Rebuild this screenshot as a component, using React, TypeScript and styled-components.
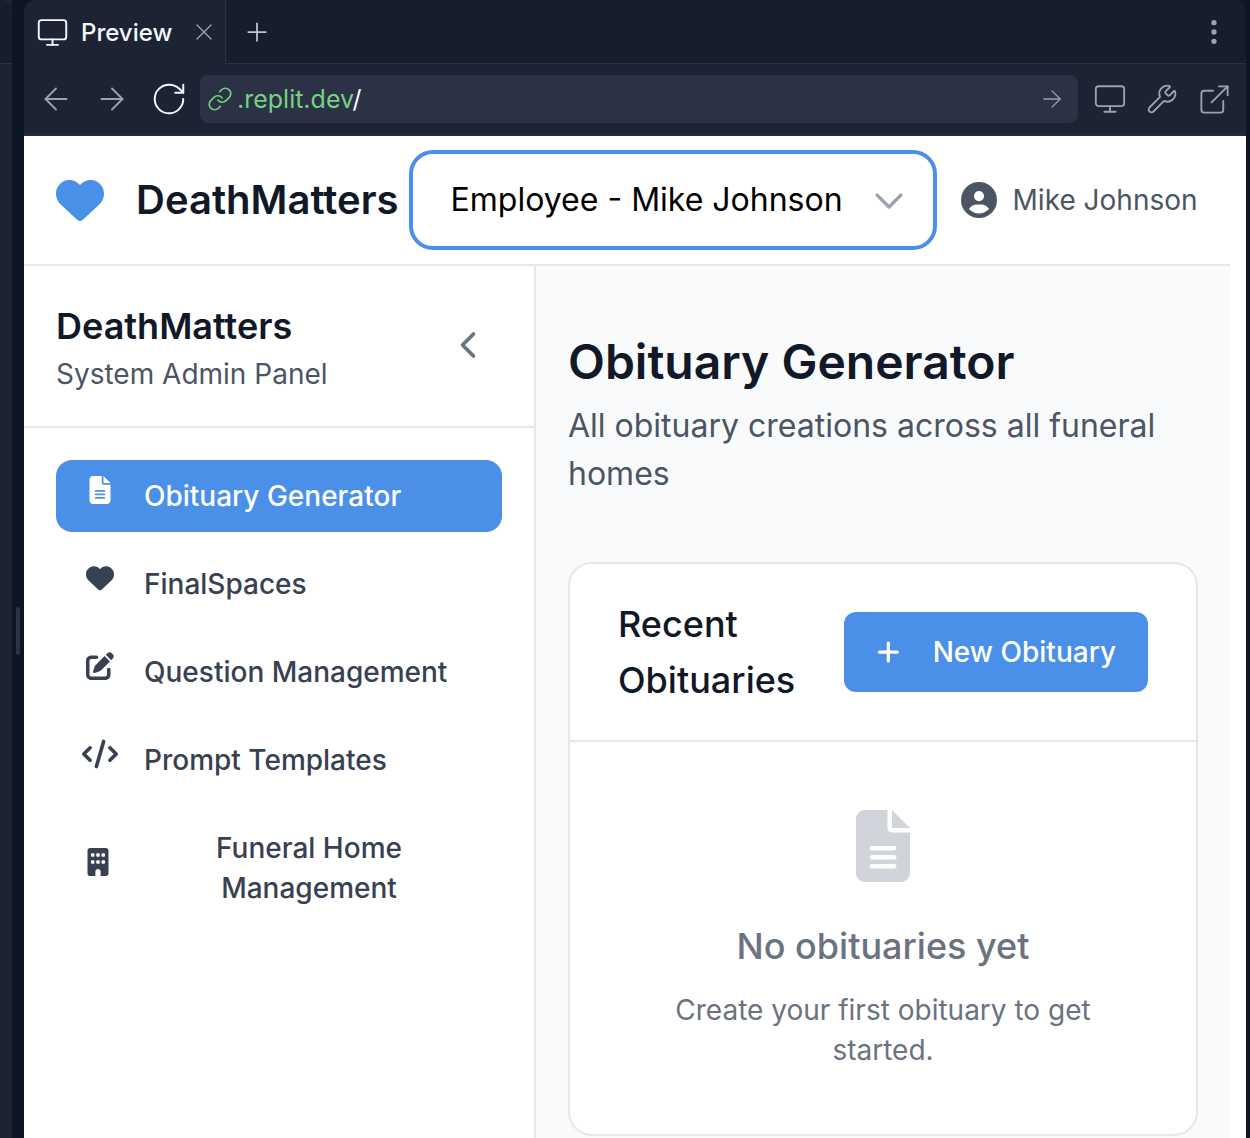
import React from 'react';
import styled, { createGlobalStyle } from 'styled-components';
import { FaHeart, FaFileLines, FaPenToSquare, FaCode, FaBuilding, FaCircleUser, FaPlus } from 'react-icons/fa6';
import { ArrowLeft, ArrowRight, ChevronDown, ChevronLeft, ExternalLink, Link, Monitor, MoreVertical, Plus, RotateCw, Wrench, X } from 'lucide-react';

const GlobalStyle = createGlobalStyle`
  html, body {
    margin: 0;
    height: 100%;
    overflow: hidden;
    background: #0e1525;
  }
  * { box-sizing: border-box; }
  #root { height: 100%; }
`;

const Shell = styled.div`
  display: flex;
  width: 1250px;
  height: 1138px;
  padding-right: 4px;
  overflow: hidden;
  font-family: Inter, "Liberation Sans", sans-serif;
`;

const SideStrip = styled.div`
  width: 24px;
  flex: none;
  display: flex;
`;

const LeftPane = styled.div`
  width: 12px;
  background: #1c2333;
`;

const LeftPaneTop = styled.div`
  height: 64px;
  background: #171d2d;
  border-bottom: 1px solid #2b3245;
  border-top-right-radius: 12px;
`;

const ResizeGutter = styled.div`
  flex: 1;
  padding: 607px 4px 0;
`;

const ResizeHandle = styled.div`
  height: 48px;
  border-radius: 2px;
  background: #2b3245;
`;

const Browser = styled.div`
  flex: 1;
  display: flex;
  flex-direction: column;
  min-width: 0;
`;

const TabBar = styled.div`
  height: 64px;
  flex: none;
  display: flex;
  align-items: stretch;
  background: #171d2d;
  border-bottom: 1px solid #2b3245;
  border-top-left-radius: 12px;
  border-top-right-radius: 12px;
  padding-right: 16px;
`;

const Tab = styled.div`
  width: 202px;
  margin-bottom: -1px;
  display: flex;
  align-items: center;
  padding: 0 7px 0 12px;
  background: #1c2333;
  border-right: 1px solid #2b3245;
  border-top-left-radius: 12px;
  color: #f5f9fc;
  font-size: 24px;
  font-weight: 500;
`;

const TabLabel = styled.span`
  margin-left: 12px;
  flex: 1;
`;

const TabClose = styled.div`
  display: flex;
  color: #9da2a6;
`;

const NewTab = styled.div`
  width: 62px;
  display: flex;
  align-items: center;
  justify-content: center;
  color: #c2c8cc;
`;

const Spacer = styled.div`
  flex: 1;
`;

const DotsBox = styled.div`
  display: flex;
  align-items: center;
  color: #9da2a6;
`;

const AddressRow = styled.div`
  height: 72px;
  flex: none;
  display: flex;
  align-items: center;
  padding: 1px 6px 0 14px;
  background: #1c2333;
  border-bottom: 3px solid #232a3b;
`;

const NavButton = styled.div<{ $bright?: boolean; $w: number }>`
  width: ${(p) => p.$w}px;
  flex: none;
  display: flex;
  color: ${(p) => (p.$bright ? '#f5f9fc' : '#9da2a6')};
`;

const UrlBox = styled.div`
  flex: 1;
  height: 48px;
  display: flex;
  align-items: center;
  padding: 0 12px 0 7px;
  border-radius: 8px;
  background: #2b3245;
  font-size: 25px;
  font-weight: 400;
  color: #f5f9fc;
`;

const UrlText = styled.span`
  flex: 1;
  margin-left: 4px;
`;

const UrlHost = styled.span`
  color: #78d183;
`;

const ToolIcons = styled.div`
  display: flex;
  align-items: center;
  margin-left: 6px;
  color: #9da2a6;
`;

const ToolCell = styled.div`
  width: 52px;
  display: flex;
  justify-content: center;
`;

const PageFrame = styled.div`
  flex: 1;
  min-height: 0;
  background: #fff;
  padding-right: 16px;
  overflow: hidden;
`;

const AppHeader = styled.header`
  height: 130px;
  display: flex;
  align-items: center;
  padding-left: 32px;
  background: #fff;
  border-bottom: 2px solid #e5e7eb;
`;

const Brand = styled.div`
  display: flex;
  align-items: center;
  font-size: 40px;
  font-weight: 600;
  color: #111827;
`;

const BrandName = styled.span`
  margin-top: -2px;
`;

const BrandIcon = styled.div`
  width: 48px;
  height: 48px;
  margin-right: 32px;
  display: flex;
  color: #4a90e9;
`;

const RoleSelect = styled.div`
  width: 528px;
  height: 100px;
  margin-left: 10px;
  padding: 0 20px 2px 38px;
  display: flex;
  align-items: center;
  justify-content: space-between;
  border: 4px solid #4a90e9;
  border-radius: 24px;
  font-size: 32px;
  color: #000;
`;

const SelectCaret = styled.div`
  display: flex;
  margin-top: 4px;
  color: #9ca3af;
`;

const UserBox = styled.div`
  margin-left: 24px;
  display: flex;
  align-items: center;
  gap: 16px;
  font-size: 28px;
  color: #4b5563;
`;

const Body = styled.div`
  display: flex;
  align-items: stretch;
  height: 872px;
`;

const Sidebar = styled.aside`
  width: 512px;
  flex: none;
  background: #fff;
  border-right: 2px solid #e5e7eb;
`;

const SidebarHead = styled.div`
  height: 162px;
  display: flex;
  align-items: center;
  justify-content: space-between;
  padding: 4px 44px 0 32px;
  border-bottom: 2px solid #e5e7eb;
`;

const SidebarTitle = styled.div`
  font-size: 36px;
  line-height: 48px;
  font-weight: 600;
  color: #111827;
`;

const SidebarSub = styled.div`
  margin-top: 4px;
  font-size: 28px;
  line-height: 40px;
  color: #4b5563;
`;

const Collapse = styled.div`
  display: flex;
  margin-bottom: 6px;
  color: #6b7280;
`;

const Nav = styled.nav`
  display: flex;
  flex-direction: column;
  gap: 16px;
  padding: 32px;
`;

const NavItem = styled.div<{ $active?: boolean }>`
  display: flex;
  align-items: center;
  min-height: 72px;
  padding: 16px 24px;
  border-radius: 16px;
  font-size: 28px;
  line-height: 40px;
  font-weight: 500;
  background: ${(p) => (p.$active ? '#4a90e9' : 'transparent')};
  color: ${(p) => (p.$active ? '#fff' : '#374151')};
`;

const NavIcon = styled.div<{ $dy?: number; $w?: number }>`
  width: ${(p) => p.$w ?? 40}px;
  flex: none;
  margin-right: 24px;
  display: flex;
  justify-content: center;
  transform: translateY(${(p) => p.$dy ?? -6}px);
`;

const NavLabel = styled.div`
  flex: 1;
  text-align: center;
`;

const Main = styled.main`
  flex: 1;
  min-width: 0;
  padding: 64px 32px 0;
  background: #f9fafb;
`;

const PageTitle = styled.h1`
  margin: 0;
  font-size: 48px;
  line-height: 64px;
  font-weight: 600;
  color: #111827;
`;

const PageSub = styled.p`
  margin: 8px 0 0;
  font-size: 32px;
  line-height: 48px;
  color: #4b5563;
`;

const Card = styled.section`
  margin-top: 64px;
  height: 574px;
  background: #fff;
  border: 2px solid #e5e7eb;
  border-radius: 24px;
`;

const CardHead = styled.div`
  height: 178px;
  display: flex;
  align-items: center;
  justify-content: space-between;
  padding: 0 48px;
  border-bottom: 2px solid #e5e7eb;
`;

const CardTitle = styled.h2`
  margin: 0;
  width: 190px;
  font-size: 36px;
  line-height: 56px;
  font-weight: 500;
  color: #111827;
`;

const PrimaryButton = styled.button`
  width: 304px;
  height: 80px;
  display: flex;
  align-items: center;
  gap: 32px;
  padding: 0 32px;
  border: 0;
  border-radius: 12px;
  background: #4a90e9;
  color: #fff;
  font-family: inherit;
  font-size: 28px;
  font-weight: 500;
  white-space: nowrap;
`;

const Empty = styled.div`
  display: flex;
  flex-direction: column;
  align-items: center;
  padding-top: 68px;
  text-align: center;
`;

const EmptyIcon = styled.div`
  display: flex;
  color: #d1d5db;
`;

const EmptyTitle = styled.h3`
  margin: 36px 0 0;
  font-size: 36px;
  line-height: 56px;
  font-weight: 500;
  color: #6b7280;
`;

const EmptySub = styled.p`
  margin: 16px 0 0;
  width: 460px;
  font-size: 28px;
  line-height: 40px;
  color: #6b7280;
`;

const navItems = [
  { label: 'FinalSpaces', icon: <FaHeart size={28} /> },
  { label: 'Question Management', icon: <FaPenToSquare size={28} /> },
  { label: 'Prompt Templates', icon: <FaCode size={36} /> },
];

export default function App() {
  return (
    <>
      <GlobalStyle />
      <Shell>
        <SideStrip>
          <LeftPane>
            <LeftPaneTop />
          </LeftPane>
          <ResizeGutter>
            <ResizeHandle />
          </ResizeGutter>
        </SideStrip>
        <Browser>
          <TabBar>
            <Tab>
              <Monitor size={33} strokeWidth={1.4} />
              <TabLabel>Preview</TabLabel>
              <TabClose>
                <X size={28} strokeWidth={1.2} />
              </TabClose>
            </Tab>
            <NewTab>
              <Plus size={30} strokeWidth={1.4} />
            </NewTab>
            <Spacer />
            <DotsBox>
              <MoreVertical size={32} strokeWidth={2} />
            </DotsBox>
          </TabBar>
          <AddressRow>
            <NavButton $w={56}>
              <ArrowLeft size={36} strokeWidth={1.25} />
            </NavButton>
            <NavButton $w={56}>
              <ArrowRight size={36} strokeWidth={1.25} />
            </NavButton>
            <NavButton $w={50} $bright>
              <RotateCw size={38} strokeWidth={1.25} />
            </NavButton>
            <UrlBox>
              <Link size={26} strokeWidth={1.5} color="#78d183" />
              <UrlText>
                <UrlHost>.replit.dev</UrlHost>/
              </UrlText>
              <ArrowRight size={28} strokeWidth={1.1} color="#9da2a6" />
            </UrlBox>
            <ToolIcons>
              <ToolCell>
                <Monitor size={34} strokeWidth={1.3} />
              </ToolCell>
              <ToolCell>
                <Wrench size={32} strokeWidth={1.4} />
              </ToolCell>
              <ToolCell>
                <ExternalLink size={35} strokeWidth={1.3} />
              </ToolCell>
            </ToolIcons>
          </AddressRow>
          <PageFrame>
            <AppHeader>
              <Brand>
                <BrandIcon>
                  <FaHeart size={48} />
                </BrandIcon>
                <BrandName>DeathMatters</BrandName>
              </Brand>
              <RoleSelect>
                Employee - Mike Johnson
                <SelectCaret>
                  <ChevronDown size={48} strokeWidth={1.6} />
                </SelectCaret>
              </RoleSelect>
              <UserBox>
                <FaCircleUser size={36} />
                Mike Johnson
              </UserBox>
            </AppHeader>
            <Body>
              <Sidebar>
                <SidebarHead>
                  <div>
                    <SidebarTitle>DeathMatters</SidebarTitle>
                    <SidebarSub>System Admin Panel</SidebarSub>
                  </div>
                  <Collapse>
                    <ChevronLeft size={44} strokeWidth={2} />
                  </Collapse>
                </SidebarHead>
                <Nav>
                  <NavItem $active>
                    <NavIcon>
                      <FaFileLines size={28} />
                    </NavIcon>
                    Obituary Generator
                  </NavItem>
                  {navItems.map((item) => (
                    <NavItem key={item.label}>
                      <NavIcon>{item.icon}</NavIcon>
                      {item.label}
                    </NavItem>
                  ))}
                  <NavItem>
                    <NavIcon $dy={-6} $w={36}>
                      <FaBuilding size={28} />
                    </NavIcon>
                    <NavLabel>
                      Funeral Home
                      <br />
                      Management
                    </NavLabel>
                  </NavItem>
                </Nav>
              </Sidebar>
              <Main>
                <PageTitle>Obituary Generator</PageTitle>
                <PageSub>All obituary creations across all funeral homes</PageSub>
                <Card>
                  <CardHead>
                    <CardTitle>Recent Obituaries</CardTitle>
                    <PrimaryButton>
                      <FaPlus size={26} />
                      New Obituary
                    </PrimaryButton>
                  </CardHead>
                  <Empty>
                    <EmptyIcon>
                      <FaFileLines size={72} />
                    </EmptyIcon>
                    <EmptyTitle>No obituaries yet</EmptyTitle>
                    <EmptySub>Create your first obituary to get started.</EmptySub>
                  </Empty>
                </Card>
              </Main>
            </Body>
          </PageFrame>
        </Browser>
      </Shell>
    </>
  );
}
